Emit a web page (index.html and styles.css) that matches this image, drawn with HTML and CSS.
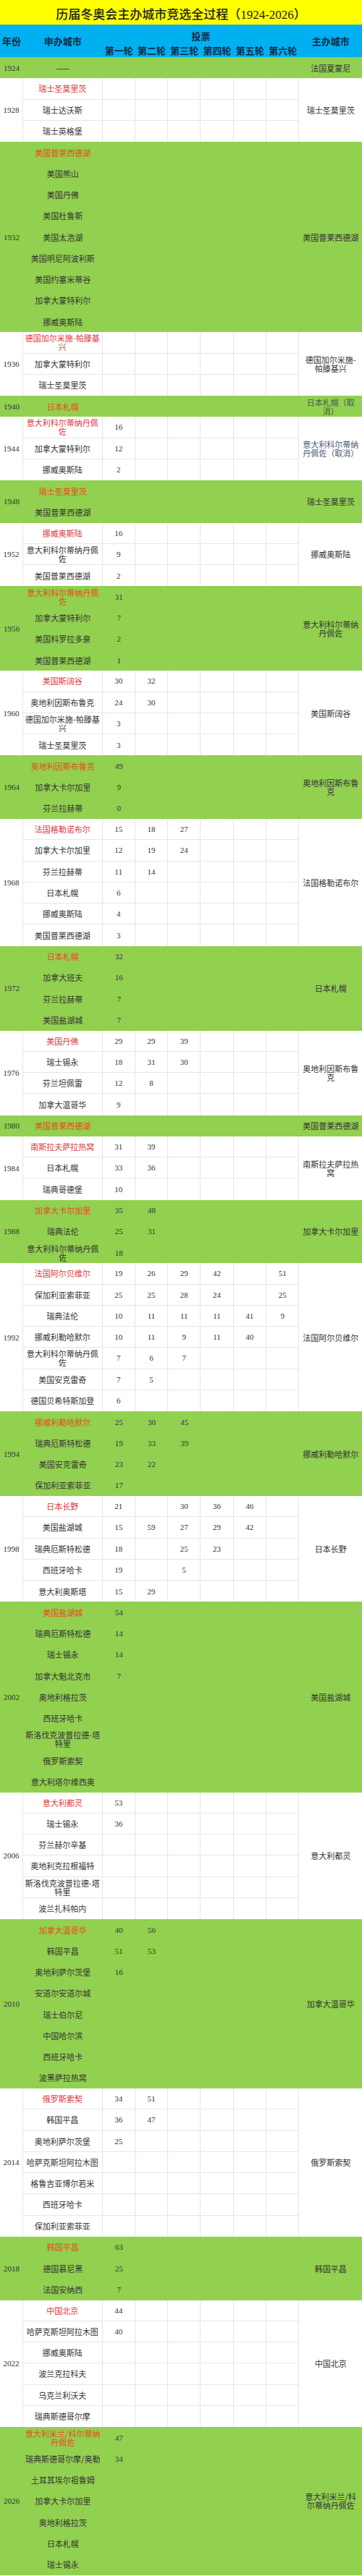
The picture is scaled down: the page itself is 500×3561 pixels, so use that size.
FILE: index.html
```html
<!DOCTYPE html>
<html lang="zh-CN">
<head>
<meta charset="utf-8">
<title>历届冬奥会主办城市竞选全过程（1924-2026）</title>
<link rel="stylesheet" href="styles.css">
</head>
<body>
<div class="title">历届冬奥会主办城市竞选全过程（1924-2026）</div>
<div class="head">
<div class="hy">年份</div><div class="hc">申办城市</div><div class="hv">投票</div><div class="hh">主办城市</div>
<div>第一轮</div><div>第二轮</div><div>第三轮</div><div>第四轮</div><div>第五轮</div><div>第六轮</div>
</div>

<div class="grp g n1">
<div class="y">1924</div><div class="h">法国夏蒙尼</div>
<div class="c">——</div>
</div>

<div class="grp w n3">
<div class="y">1928</div><div class="h">瑞士圣莫里茨</div>
<div class="c win">瑞士圣莫里茨</div><div class="v"></div><div class="v"></div><div class="v"></div><div class="v"></div><div class="v"></div><div class="v"></div>
<div class="c">瑞士达沃斯</div><div class="v"></div><div class="v"></div><div class="v"></div><div class="v"></div><div class="v"></div><div class="v"></div>
<div class="c">瑞士英格堡</div><div class="v"></div><div class="v"></div><div class="v"></div><div class="v"></div><div class="v"></div><div class="v"></div>
</div>

<div class="grp g n9">
<div class="y">1932</div><div class="h">美国普莱西德湖</div>
<div class="c win">美国普莱西德湖</div>
<div class="c">美国熊山</div>
<div class="c">美国丹佛</div>
<div class="c">美国杜鲁斯</div>
<div class="c">美国太浩湖</div>
<div class="c">美国明尼阿波利斯</div>
<div class="c">美国约塞米蒂谷</div>
<div class="c">加拿大蒙特利尔</div>
<div class="c">挪威奥斯陆</div>
</div>

<div class="grp w n3">
<div class="y">1936</div><div class="h">德国加尔米施-帕滕基兴</div>
<div class="c win">德国加尔米施-帕滕基兴</div><div class="v"></div><div class="v"></div><div class="v"></div><div class="v"></div><div class="v"></div><div class="v"></div>
<div class="c">加拿大蒙特利尔</div><div class="v"></div><div class="v"></div><div class="v"></div><div class="v"></div><div class="v"></div><div class="v"></div>
<div class="c">瑞士圣莫里茨</div><div class="v"></div><div class="v"></div><div class="v"></div><div class="v"></div><div class="v"></div><div class="v"></div>
</div>

<div class="grp g n1">
<div class="y">1940</div><div class="h dim">日本札幌（取消）</div>
<div class="c win">日本札幌</div>
</div>

<div class="grp w n3">
<div class="y">1944</div><div class="h cx">意大利科尔蒂纳丹佩佐（取消）</div>
<div class="c win">意大利科尔蒂纳丹佩佐</div><div class="v">16</div><div class="v"></div><div class="v"></div><div class="v"></div><div class="v"></div><div class="v"></div>
<div class="c">加拿大蒙特利尔</div><div class="v">12</div><div class="v"></div><div class="v"></div><div class="v"></div><div class="v"></div><div class="v"></div>
<div class="c">挪威奥斯陆</div><div class="v">2</div><div class="v"></div><div class="v"></div><div class="v"></div><div class="v"></div><div class="v"></div>
</div>

<div class="grp g n2">
<div class="y">1948</div><div class="h">瑞士圣莫里茨</div>
<div class="c win">瑞士圣莫里茨</div>
<div class="c">美国普莱西德湖</div>
</div>

<div class="grp w n3">
<div class="y">1952</div><div class="h">挪威奥斯陆</div>
<div class="c win">挪威奥斯陆</div><div class="v">16</div><div class="v"></div><div class="v"></div><div class="v"></div><div class="v"></div><div class="v"></div>
<div class="c">意大利科尔蒂纳丹佩佐</div><div class="v">9</div><div class="v"></div><div class="v"></div><div class="v"></div><div class="v"></div><div class="v"></div>
<div class="c">美国普莱西德湖</div><div class="v">2</div><div class="v"></div><div class="v"></div><div class="v"></div><div class="v"></div><div class="v"></div>
</div>

<div class="grp g n4">
<div class="y">1956</div><div class="h">意大利科尔蒂纳丹佩佐</div>
<div class="c win">意大利科尔蒂纳丹佩佐</div><div class="v">31</div>
<div class="c">加拿大蒙特利尔</div><div class="v">7</div>
<div class="c">美国科罗拉多泉</div><div class="v">2</div>
<div class="c">美国普莱西德湖</div><div class="v">1</div>
</div>

<div class="grp w n4">
<div class="y">1960</div><div class="h">美国斯阔谷</div>
<div class="c win">美国斯阔谷</div><div class="v">30</div><div class="v">32</div><div class="v"></div><div class="v"></div><div class="v"></div><div class="v"></div>
<div class="c">奥地利因斯布鲁克</div><div class="v">24</div><div class="v">30</div><div class="v"></div><div class="v"></div><div class="v"></div><div class="v"></div>
<div class="c">德国加尔米施-帕滕基兴</div><div class="v">3</div><div class="v"></div><div class="v"></div><div class="v"></div><div class="v"></div><div class="v"></div>
<div class="c">瑞士圣莫里茨</div><div class="v">3</div><div class="v"></div><div class="v"></div><div class="v"></div><div class="v"></div><div class="v"></div>
</div>

<div class="grp g n3">
<div class="y">1964</div><div class="h">奥地利因斯布鲁克</div>
<div class="c win">奥地利因斯布鲁克</div><div class="v">49</div>
<div class="c">加拿大卡尔加里</div><div class="v">9</div>
<div class="c">芬兰拉赫蒂</div><div class="v">0</div>
</div>

<div class="grp w n6">
<div class="y">1968</div><div class="h">法国格勒诺布尔</div>
<div class="c win">法国格勒诺布尔</div><div class="v">15</div><div class="v">18</div><div class="v">27</div><div class="v"></div><div class="v"></div><div class="v"></div>
<div class="c">加拿大卡尔加里</div><div class="v">12</div><div class="v">19</div><div class="v">24</div><div class="v"></div><div class="v"></div><div class="v"></div>
<div class="c">芬兰拉赫蒂</div><div class="v">11</div><div class="v">14</div><div class="v"></div><div class="v"></div><div class="v"></div><div class="v"></div>
<div class="c">日本札幌</div><div class="v">6</div><div class="v"></div><div class="v"></div><div class="v"></div><div class="v"></div><div class="v"></div>
<div class="c">挪威奥斯陆</div><div class="v">4</div><div class="v"></div><div class="v"></div><div class="v"></div><div class="v"></div><div class="v"></div>
<div class="c">美国普莱西德湖</div><div class="v">3</div><div class="v"></div><div class="v"></div><div class="v"></div><div class="v"></div><div class="v"></div>
</div>

<div class="grp g n4">
<div class="y">1972</div><div class="h">日本札幌</div>
<div class="c win">日本札幌</div><div class="v">32</div>
<div class="c">加拿大班夫</div><div class="v">16</div>
<div class="c">芬兰拉赫蒂</div><div class="v">7</div>
<div class="c">美国盐湖城</div><div class="v">7</div>
</div>

<div class="grp w n4">
<div class="y">1976</div><div class="h">奥地利因斯布鲁克</div>
<div class="c win">美国丹佛</div><div class="v">29</div><div class="v">29</div><div class="v">39</div><div class="v"></div><div class="v"></div><div class="v"></div>
<div class="c">瑞士锡永</div><div class="v">18</div><div class="v">31</div><div class="v">30</div><div class="v"></div><div class="v"></div><div class="v"></div>
<div class="c">芬兰坦佩雷</div><div class="v">12</div><div class="v">8</div><div class="v"></div><div class="v"></div><div class="v"></div><div class="v"></div>
<div class="c">加拿大温哥华</div><div class="v">9</div><div class="v"></div><div class="v"></div><div class="v"></div><div class="v"></div><div class="v"></div>
</div>

<div class="grp g n1">
<div class="y">1980</div><div class="h">美国普莱西德湖</div>
<div class="c win">美国普莱西德湖</div>
</div>

<div class="grp w n3">
<div class="y">1984</div><div class="h">南斯拉夫萨拉热窝</div>
<div class="c win">南斯拉夫萨拉热窝</div><div class="v">31</div><div class="v">39</div><div class="v"></div><div class="v"></div><div class="v"></div><div class="v"></div>
<div class="c">日本札幌</div><div class="v">33</div><div class="v">36</div><div class="v"></div><div class="v"></div><div class="v"></div><div class="v"></div>
<div class="c">瑞典哥德堡</div><div class="v">10</div><div class="v"></div><div class="v"></div><div class="v"></div><div class="v"></div><div class="v"></div>
</div>

<div class="grp g n3">
<div class="y">1988</div><div class="h">加拿大卡尔加里</div>
<div class="c win">加拿大卡尔加里</div><div class="v">35</div><div class="v">48</div>
<div class="c">瑞典法伦</div><div class="v">25</div><div class="v">31</div>
<div class="c">意大利科尔蒂纳丹佩佐</div><div class="v">18</div>
</div>

<div class="grp w n7">
<div class="y">1992</div><div class="h">法国阿尔贝维尔</div>
<div class="c win">法国阿尔贝维尔</div><div class="v">19</div><div class="v">26</div><div class="v">29</div><div class="v">42</div><div class="v"></div><div class="v">51</div>
<div class="c">保加利亚索菲亚</div><div class="v">25</div><div class="v">25</div><div class="v">28</div><div class="v">24</div><div class="v"></div><div class="v">25</div>
<div class="c">瑞典法伦</div><div class="v">10</div><div class="v">11</div><div class="v">11</div><div class="v">11</div><div class="v">41</div><div class="v">9</div>
<div class="c">挪威利勒哈默尔</div><div class="v">10</div><div class="v">11</div><div class="v">9</div><div class="v">11</div><div class="v">40</div><div class="v"></div>
<div class="c">意大利科尔蒂纳丹佩佐</div><div class="v">7</div><div class="v">6</div><div class="v">7</div><div class="v"></div><div class="v"></div><div class="v"></div>
<div class="c">美国安克雷奇</div><div class="v">7</div><div class="v">5</div><div class="v"></div><div class="v"></div><div class="v"></div><div class="v"></div>
<div class="c">德国贝希特斯加登</div><div class="v">6</div><div class="v"></div><div class="v"></div><div class="v"></div><div class="v"></div><div class="v"></div>
</div>

<div class="grp g n4">
<div class="y">1994</div><div class="h">挪威利勒哈默尔</div>
<div class="c win">挪威利勒哈默尔</div><div class="v">25</div><div class="v">30</div><div class="v">45</div>
<div class="c">瑞典厄斯特松德</div><div class="v">19</div><div class="v">33</div><div class="v">39</div>
<div class="c">美国安克雷奇</div><div class="v">23</div><div class="v">22</div>
<div class="c">保加利亚索菲亚</div><div class="v">17</div>
</div>

<div class="grp w n5">
<div class="y">1998</div><div class="h">日本长野</div>
<div class="c win">日本长野</div><div class="v">21</div><div class="v"></div><div class="v">30</div><div class="v">36</div><div class="v">46</div><div class="v"></div>
<div class="c">美国盐湖城</div><div class="v">15</div><div class="v">59</div><div class="v">27</div><div class="v">29</div><div class="v">42</div><div class="v"></div>
<div class="c">瑞典厄斯特松德</div><div class="v">18</div><div class="v"></div><div class="v">25</div><div class="v">23</div><div class="v"></div><div class="v"></div>
<div class="c">西班牙哈卡</div><div class="v">19</div><div class="v"></div><div class="v">5</div><div class="v"></div><div class="v"></div><div class="v"></div>
<div class="c">意大利奥斯塔</div><div class="v">15</div><div class="v">29</div><div class="v"></div><div class="v"></div><div class="v"></div><div class="v"></div>
</div>

<div class="grp g n9">
<div class="y">2002</div><div class="h">美国盐湖城</div>
<div class="c win">美国盐湖城</div><div class="v">54</div>
<div class="c">瑞典厄斯特松德</div><div class="v">14</div>
<div class="c">瑞士锡永</div><div class="v">14</div>
<div class="c">加拿大魁北克市</div><div class="v">7</div>
<div class="c">奥地利格拉茨</div>
<div class="c">西班牙哈卡</div>
<div class="c">斯洛伐克波普拉德-塔特里</div>
<div class="c">俄罗斯索契</div>
<div class="c">意大利塔尔维西奥</div>
</div>

<div class="grp w n6">
<div class="y">2006</div><div class="h">意大利都灵</div>
<div class="c win">意大利都灵</div><div class="v">53</div><div class="v"></div><div class="v"></div><div class="v"></div><div class="v"></div><div class="v"></div>
<div class="c">瑞士锡永</div><div class="v">36</div><div class="v"></div><div class="v"></div><div class="v"></div><div class="v"></div><div class="v"></div>
<div class="c">芬兰赫尔辛基</div><div class="v"></div><div class="v"></div><div class="v"></div><div class="v"></div><div class="v"></div><div class="v"></div>
<div class="c">奥地利克拉根福特</div><div class="v"></div><div class="v"></div><div class="v"></div><div class="v"></div><div class="v"></div><div class="v"></div>
<div class="c">斯洛伐克波普拉德-塔特里</div><div class="v"></div><div class="v"></div><div class="v"></div><div class="v"></div><div class="v"></div><div class="v"></div>
<div class="c">波兰扎科帕内</div><div class="v"></div><div class="v"></div><div class="v"></div><div class="v"></div><div class="v"></div><div class="v"></div>
</div>

<div class="grp g n8">
<div class="y">2010</div><div class="h">加拿大温哥华</div>
<div class="c win">加拿大温哥华</div><div class="v">40</div><div class="v">56</div>
<div class="c">韩国平昌</div><div class="v">51</div><div class="v">53</div>
<div class="c">奥地利萨尔茨堡</div><div class="v">16</div>
<div class="c">安道尔安道尔城</div>
<div class="c">瑞士伯尔尼</div>
<div class="c">中国哈尔滨</div>
<div class="c">西班牙哈卡</div>
<div class="c">波黑萨拉热窝</div>
</div>

<div class="grp w n7">
<div class="y">2014</div><div class="h">俄罗斯索契</div>
<div class="c win">俄罗斯索契</div><div class="v">34</div><div class="v">51</div><div class="v"></div><div class="v"></div><div class="v"></div><div class="v"></div>
<div class="c">韩国平昌</div><div class="v">36</div><div class="v">47</div><div class="v"></div><div class="v"></div><div class="v"></div><div class="v"></div>
<div class="c">奥地利萨尔茨堡</div><div class="v">25</div><div class="v"></div><div class="v"></div><div class="v"></div><div class="v"></div><div class="v"></div>
<div class="c">哈萨克斯坦阿拉木图</div><div class="v"></div><div class="v"></div><div class="v"></div><div class="v"></div><div class="v"></div><div class="v"></div>
<div class="c">格鲁吉亚博尔若米</div><div class="v"></div><div class="v"></div><div class="v"></div><div class="v"></div><div class="v"></div><div class="v"></div>
<div class="c">西班牙哈卡</div><div class="v"></div><div class="v"></div><div class="v"></div><div class="v"></div><div class="v"></div><div class="v"></div>
<div class="c">保加利亚索菲亚</div><div class="v"></div><div class="v"></div><div class="v"></div><div class="v"></div><div class="v"></div><div class="v"></div>
</div>

<div class="grp g n3">
<div class="y">2018</div><div class="h">韩国平昌</div>
<div class="c win">韩国平昌</div><div class="v">63</div>
<div class="c">德国慕尼黑</div><div class="v">25</div>
<div class="c">法国安纳西</div><div class="v">7</div>
</div>

<div class="grp w n6">
<div class="y">2022</div><div class="h">中国北京</div>
<div class="c win">中国北京</div><div class="v">44</div><div class="v"></div><div class="v"></div><div class="v"></div><div class="v"></div><div class="v"></div>
<div class="c">哈萨克斯坦阿拉木图</div><div class="v">40</div><div class="v"></div><div class="v"></div><div class="v"></div><div class="v"></div><div class="v"></div>
<div class="c">挪威奥斯陆</div><div class="v"></div><div class="v"></div><div class="v"></div><div class="v"></div><div class="v"></div><div class="v"></div>
<div class="c">波兰克拉科夫</div><div class="v"></div><div class="v"></div><div class="v"></div><div class="v"></div><div class="v"></div><div class="v"></div>
<div class="c">乌克兰利沃夫</div><div class="v"></div><div class="v"></div><div class="v"></div><div class="v"></div><div class="v"></div><div class="v"></div>
<div class="c">瑞典斯德哥尔摩</div><div class="v"></div><div class="v"></div><div class="v"></div><div class="v"></div><div class="v"></div><div class="v"></div>
</div>

<div class="grp g n7">
<div class="y">2026</div><div class="h">意大利米兰/科尔蒂纳丹佩佐</div>
<div class="c win">意大利米兰/科尔蒂纳丹佩佐</div><div class="v">47</div>
<div class="c">瑞典斯德哥尔摩/奥勒</div><div class="v">34</div>
<div class="c">土耳其埃尔祖鲁姆</div>
<div class="c">加拿大卡尔加里</div>
<div class="c">奥地利格拉茨</div>
<div class="c">日本札幌</div>
<div class="c">瑞士锡永</div>
</div>
</body>
</html>
```

FILE: styles.css
```css
* {
  box-sizing: border-box;
}

body {
  margin: 0;
  width: 500px;
  font-family: "Noto Sans CJK SC", sans-serif;
  font-size: 11px;
  color: #333;
  background: #fff;
}

.title {
  height: 34px;
  padding-top: 2px;
  background: #ffff00;
  display: flex;
  align-items: center;
  justify-content: center;
  font-family: "Liberation Serif", "Noto Sans CJK SC", serif;
  font-size: 17px;
  font-weight: 500;
  color: #1a1a1a;
  white-space: nowrap;
}

.head {
  display: grid;
  grid-template-columns: 32px 109.5px repeat(6, 45.3px) 1fr;
  grid-template-rows: 26px 19px;
  background: #00b0f0;
  font-size: 13px;
  font-weight: bold;
  color: #132a45;
}

.head > div {
  display: flex;
  align-items: center;
  justify-content: center;
  white-space: nowrap;
}

.head .hy { grid-column: 1; grid-row: 1 / 3; }
.head .hc { grid-column: 2; grid-row: 1 / 3; }
.head .hv { grid-column: 3 / 9; grid-row: 1; padding-top: 4px; }
.head .hh { grid-column: 9; grid-row: 1 / 3; }

.grp {
  display: grid;
  grid-template-columns: 32px 109.5px repeat(6, 45.3px) 1fr;
  grid-auto-rows: 29.26px;
}

.n1 { grid-template-rows: repeat(1, 29.26px); }
.n2 { grid-template-rows: repeat(2, 29.26px); }
.n3 { grid-template-rows: repeat(3, 29.26px); }
.n4 { grid-template-rows: repeat(4, 29.26px); }
.n5 { grid-template-rows: repeat(5, 29.26px); }
.n6 { grid-template-rows: repeat(6, 29.26px); }
.n7 { grid-template-rows: repeat(7, 29.26px); }
.n8 { grid-template-rows: repeat(8, 29.26px); }
.n9 { grid-template-rows: repeat(9, 29.26px); }

.g { background: #92d050; }
.w { background: #fff; }

.grp > div {
  display: flex;
  align-items: center;
  justify-content: center;
  text-align: center;
  line-height: 12px;
}

.y {
  grid-column: 1;
  grid-row: 1 / -1;
  font-family: "Liberation Serif", "Noto Sans CJK SC", serif;
  font-size: 11px;
}

.h {
  grid-column: 9;
  grid-row: 1 / -1;
  padding: 0 4px;
}

.c {
  grid-column: 2;
  padding: 0 2px;
}

.v {
  font-family: "Liberation Serif", "Noto Sans CJK SC", serif;
  font-size: 11px;
}

.w .y {
  border-right: 1px solid #e6e6e6;
}

.w .c,
.w .v {
  border-right: 1px solid #e6e6e6;
  border-bottom: 1px solid #e6e6e6;
}

.w > div:nth-last-child(-n+7) {
  border-bottom: 0;
}

.w .win { color: #e0383e; }
.g .win { color: #e84a1e; }

.dim { color: #4a5a4a; }
.cx { color: #4a5878; }
```
